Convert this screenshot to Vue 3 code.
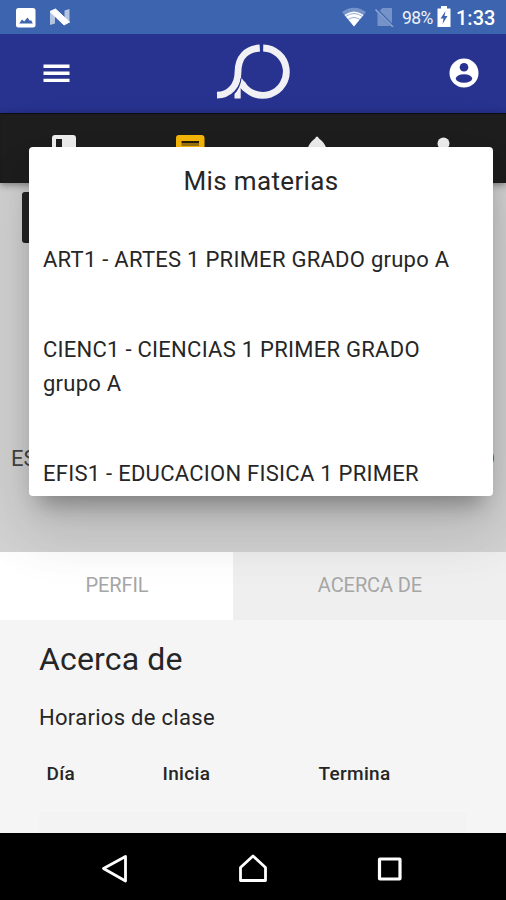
<script setup>
const subjects = [
  'ART1 - ARTES 1 PRIMER GRADO grupo A',
  'CIENC1 - CIENCIAS 1 PRIMER GRADO grupo A',
  'EFIS1 - EDUCACION FISICA 1 PRIMER',
]
const columns = ['Día', 'Inicia', 'Termina']
</script>

<template>
  <div class="screen">
    <div class="status">
      <div class="status-left">
        <svg width="20" height="20" viewBox="0 0 20 20"><rect width="19.500" height="19.500" rx="2.500" fill="#fff" /><path d="M3.200 15.500 6 11.500l2.200 2 3.300-4L14 13l1-1 1.800 3.500z" fill="#3d63ad" /></svg>
        <svg width="22" height="18" viewBox="0 0 22 18"><path d="M1 3v14l5-1.500V3zM20.500 1v14l-5-2V2.500z" fill="#b4c5e2" /><path d="M1 3.500 6.500 1 20.500 14l-5.500 3z" fill="#fff" stroke="#fff" stroke-linejoin="round" /></svg>
      </div>
      <div class="status-right">
        <svg class="wifi" width="24" height="20" viewBox="0 0 24 20"><path d="M12 19.500 0 5Q12-3.500 24 5z" fill="#7593c8" /><path d="M12 19.500 2.500 8Q12 1 21.500 8z" fill="#fff" /><path d="M3.500 9.500Q12 3.500 20.500 9.500M6 12.500Q12 8.500 18 12.500" fill="none" stroke="#7d99cd" stroke-width=".8" /></svg>
        <svg class="sim" width="20" height="20" viewBox="0 0 20 20"><path d="M7.500 1H17v18H2.500V6z" fill="#7593c8" /><path d="M0 1 18.500 20" stroke="#3f66b0" stroke-width="3" /><path d="M.5 2.500 18 20" stroke="#8ba4d0" stroke-width="1.600" /></svg>
        <span class="percent">98%</span>
        <svg class="battery" width="14" height="22" viewBox="0 0 14 22"><path d="M4 0h6v2.500h3.500V21H.5V2.500H4z" fill="#fff" /><path d="M8.500 5 3.500 12.500h3L5.500 18l5-8H7.500z" fill="#3d63ad" /></svg>
        <span class="clock">1:33</span>
      </div>
    </div>

    <header class="header">
      <svg class="menu" width="27" height="19" viewBox="0 0 27 19"><path d="M.5 2.200h26M.5 9.300h26M.5 16.400h26" stroke="#fff" stroke-width="3.400" /></svg>
      <svg class="logo" width="74" height="58" viewBox="217 43 74 58">
        <path d="M260.800 48C247 49 239 57.500 239 72C239 86 230 95 218 95.200" fill="none" stroke="#f1f1f5" stroke-width="6.800" />
        <path d="M264.200 48A23.700 23.700 0 1 1 242.800 83" fill="none" stroke="#f1f1f5" stroke-width="6.800" />
        <path d="M242.300 77.500 245.500 82 244.500 91.500 241.700 88V98.500h-6.200V94Q241 88 242.300 77.500z" fill="#f1f1f5" />
        <path d="M242.200 78Q240.800 87.500 236 92.500" fill="none" stroke="#28338f" stroke-width="1" />
      </svg>
      <svg class="account" width="30" height="30" viewBox="0 0 30 30"><circle cx="15" cy="15" r="14.500" fill="#fff" /><circle cx="15" cy="9.300" r="4.300" fill="#28338f" /><ellipse cx="15" cy="20.500" rx="8.200" ry="4.300" fill="#28338f" /></svg>
    </header>

    <nav class="sections">
      <svg width="126" height="48" viewBox="0 0 126 48"><rect x="52" y="22" width="24" height="24" rx="3" fill="#f1f1f1" /><path d="M56 26h6v9h-6z" fill="#1e1e1e" /></svg>
      <svg width="127" height="48" viewBox="126 0 127 48"><rect x="176" y="22" width="28.500" height="24" rx="3" fill="#f9b806" /><path d="M181.500 29h17.500" stroke="#292006" stroke-width="2" /><path d="M181.500 31.500h17.500" stroke="#9b740d" stroke-width="3" /></svg>
      <svg width="126" height="48" viewBox="253 0 126 48"><path d="M308 37v-2q1-5 7-9.500Q317 21.500 319 25.500 325 30 326 35v10h-18z" fill="#f1f1f1" /></svg>
      <svg width="127" height="48" viewBox="379 0 127 48"><circle cx="443.500" cy="30.500" r="6" fill="#f1f1f1" /></svg>
    </nav>

    <section class="profile">
      <div class="photo-button"></div>
      <div class="school"><span>ES</span><span>O</span></div>
    </section>

    <div class="tabs">
      <div class="tab active">PERFIL</div>
      <div class="tab inactive">ACERCA DE</div>
    </div>

    <main class="content">
      <h1>Acerca de</h1>
      <h2>Horarios de clase</h2>
      <div class="table-head">
        <span v-for="column in columns" :key="column">{{ column }}</span>
      </div>
      <div class="table-row"></div>
    </main>

    <footer class="navbar">
      <svg width="28" height="30" viewBox="0 0 28 30"><path d="M24.500 2.500v24.500L2.500 14.500z" fill="none" stroke="#fff" stroke-width="2.800" stroke-linejoin="round" /></svg>
      <svg width="30" height="30" viewBox="0 0 30 30"><path d="M2.500 26.500V13.500L15 2 27.500 13.500v13z" fill="none" stroke="#fff" stroke-width="2.800" stroke-linejoin="round" /></svg>
      <svg width="26" height="26" viewBox="0 0 26 26"><rect x="2.500" y="3" width="20.500" height="20" rx=".5" fill="none" stroke="#fff" stroke-width="3.200" /></svg>
    </footer>

    <div class="dialog">
      <div class="dialog-title">Mis materias</div>
      <ul>
        <li v-for="subject in subjects" :key="subject">{{ subject }}</li>
      </ul>
    </div>
  </div>
</template>

<style>
body { margin: 0; background: #000; }
</style>

<style scoped>
* { box-sizing: border-box; }
svg { display: block; flex: none; }
.screen { position: relative; display: flex; flex-direction: column; width: 506px; height: 900px; overflow: hidden; font-family: Roboto, sans-serif; color: #262626; background: #f5f5f5; }
.status { height: 34px; flex: none; display: flex; justify-content: space-between; background: #3d64ae; color: #fff; }
.status-left { display: flex; gap: 13px; padding: 8px 0 0 16px; }
.status-right { display: flex; align-items: flex-start; padding-right: 11px; }
.wifi { margin: 7px 9px 0 0; }
.sim { margin: 7px 7px 0 0; }
.percent { width: 31px; font-size: 17.500px; line-height: 20px; letter-spacing: -0.600px; margin: 8px 4px 0 0; color: #edf2fb; }
.battery { margin: 6px 5px 0 0; }
.clock { width: 39px; font-size: 20px; line-height: 22px; font-weight: 500; margin-top: 7px; white-space: nowrap; }
.header { height: 79px; flex: none; display: flex; align-items: flex-start; background: #28338f; }
.menu { margin: 30px 0 0 43px; }
.logo { margin: 9px 0 0 146px; }
.account { margin: 24px 0 0 159px; }
.sections { position: relative; height: 70px; flex: none; display: flex; background: #1e1e1e; box-shadow: 0 2px 7px rgba(0,0,0,.4), inset 0 1px 1px #0c0c16; }
.profile { height: 369px; flex: none; background: #d3d3d3; padding-top: 9px; }
.photo-button { width: 80px; height: 51px; margin-left: 22px; border-radius: 3px; background: #242424; }
.school { display: flex; justify-content: space-between; margin: 203px 11px 0 11px; font-size: 22px; line-height: 26px; color: #444; }
.tabs { position: relative; height: 68px; flex: none; display: flex; background: #fff; }
.tab { display: flex; align-items: center; justify-content: center; font-size: 20px; letter-spacing: -.1px; color: #a6a6a6; padding: 0 0 2px 1px; }
.active { width: 233px; background: #fff; }
.inactive { flex: 1; background: #efefef; }
.content { height: 213px; flex: none; padding: 20px 39px 0; display: flex; flex-direction: column; background: #f5f5f5; }
h1 { margin: 0; font-size: 32px; line-height: 38px; font-weight: 400; letter-spacing: .150px; }
h2 { margin: 27px 0 0; font-size: 22px; line-height: 26px; font-weight: 400; letter-spacing: .300px; }
.table-head { display: grid; grid-template-columns: 116px 156px 1fr; margin-top: 31px; padding-left: 7.500px; font-size: 19px; line-height: 24px; font-weight: 500; letter-spacing: .320px; }
.table-row { margin-top: 26px; height: 21px; background: #f3f3f3; }
.navbar { height: 67px; flex: none; display: flex; align-items: center; justify-content: center; gap: 109px; padding: 4px 2px 0 0; background: #000; }
.dialog { position: absolute; left: 29px; top: 147px; width: 464px; height: 349px; padding: 15px 14px 0; overflow: hidden; background: #fff; border-radius: 4px; box-shadow: 0 17px 23px -10px rgba(0,0,0,.34), 0 37px 58px 5px rgba(0,0,0,.08), 0 14px 70px 12px rgba(0,0,0,.07); }
.dialog-title { text-align: center; font-size: 26px; line-height: 38px; letter-spacing: .350px; }
ul { list-style: none; margin: 33px 0 0; padding: 0; }
li { padding: 10px 0 46px; font-size: 22px; line-height: 34px; letter-spacing: .260px; }
li:last-child { padding-bottom: 0; }
</style>
